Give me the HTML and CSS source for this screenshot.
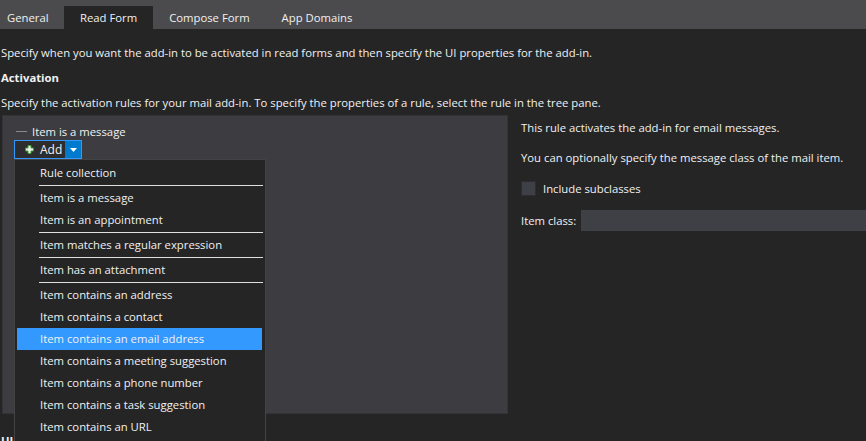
FILE: index.html
```html
<!DOCTYPE html>
<html>
<head>
<meta charset="utf-8">
<link rel="stylesheet" href="styles.css">
</head>
<body>
<div class="tabs">
  <div class="tab first">General</div>
  <div class="tab active">Read Form</div>
  <div class="tab">Compose Form</div>
  <div class="tab">App Domains</div>
</div>
<div class="content">
  <p class="line intro">Specify when you want the add-in to be activated in read forms and then specify the UI properties for the add-in.</p>
  <p class="line heading">Activation</p>
  <p class="line">Specify the activation rules for your mail add-in. To specify the properties of a rule, select the rule in the tree pane.</p>
  <div class="activation">
    <div class="tree">
      <div class="node"><span class="dash"></span>Item is a message</div>
      <div class="add-btn">
        <span class="add-main">
          <svg class="plus" width="9" height="9" viewBox="0 0 9 9"><path d="M3 0.5h3v2.5h2.5v3h-2.5v2.5h-3v-2.5h-2.5v-3h2.5z" fill="#e8f3e6" stroke="#3c9a35" stroke-width="1"/></svg>
          Add
        </span>
        <span class="add-arrow"><svg width="7" height="4" viewBox="0 0 7 4"><path d="M0 0h7L3.5 4z" fill="#fff"/></svg></span>
      </div>
    </div>
    <div class="props">
      <p class="pline">This rule activates the add-in for email messages.</p>
      <p class="pline">You can optionally specify the message class of the mail item.</p>
      <div class="check-row"><span class="checkbox"></span>Include subclasses</div>
      <div class="class-row"><span class="label">Item class:</span><span class="input"></span></div>
    </div>
  </div>
  <p class="line heading ui">UI Properties</p>
</div>
<div class="menu">
  <div class="mi">Rule collection</div>
  <div class="sep"></div>
  <div class="mi">Item is a message</div>
  <div class="mi">Item is an appointment</div>
  <div class="sep"></div>
  <div class="mi">Item matches a regular expression</div>
  <div class="sep"></div>
  <div class="mi">Item has an attachment</div>
  <div class="sep"></div>
  <div class="mi">Item contains an address</div>
  <div class="mi">Item contains a contact</div>
  <div class="mi selected">Item contains an email address</div>
  <div class="mi">Item contains a meeting suggestion</div>
  <div class="mi">Item contains a phone number</div>
  <div class="mi">Item contains a task suggestion</div>
  <div class="mi">Item contains an URL</div>
</div>
</body>
</html>
```
FILE: styles.css
```css
html, body {
  margin: 0;
  padding: 0;
  background: #252526;
  color: #f1f1f1;
  font-family: "Open Sans", "Noto Sans", sans-serif;
  font-size: 11.3px;
  overflow: hidden;
  height: 441px;
}
.tabs {
  height: 29px;
  background: #4b4b4d;
  display: flex;
  align-items: flex-end;
}
.tab {
  height: 23px;
  line-height: 23px;
  padding: 0 16px;
  color: #f1f1f1;
}
.tab.first {
  padding-left: 7px;
  padding-right: 0;
  width: 57px;
}
.tab.active {
  background: #252526;
}
.content {
  padding: 0 0 0 1px;
}
.line {
  margin: 0;
  line-height: 16px;
  white-space: nowrap;
}
.intro {
  margin-top: 16px;
}
.heading {
  font-weight: bold;
  margin-top: 9px;
}
.heading + .line {
  margin-top: 9px;
}
.activation {
  display: flex;
  margin-top: 4px;
  margin-left: 1px;
}
.tree {
  width: 504px;
  background: #3c3c41;
  border: 1px solid #333337;
  flex: none;
  padding-top: 7px;
  box-sizing: content-box;
  height: 290px;
}
.node {
  display: flex;
  align-items: center;
  height: 16px;
  padding-left: 13px;
}
.dash {
  width: 11px;
  height: 1px;
  background: #8a8a8e;
  margin-right: 5px;
}
.add-btn {
  display: flex;
  margin-left: 11px;
  margin-top: 1px;
  width: 66px;
  height: 17px;
  border: 1px solid #3399ff;
}
.add-main {
  flex: 1;
  display: flex;
  align-items: center;
  background: #2d2d30;
  padding-left: 10px;
  gap: 6px;
  line-height: 17px;
  font-size: 12px;
}
.plus {
  display: block;
}
.add-arrow {
  width: 16px;
  background: #007acc;
  display: flex;
  align-items: center;
  justify-content: center;
}
.add-arrow svg {
  display: block;
}
.props {
  padding-left: 13px;
  padding-top: 5px;
  flex: 1;
}
.pline {
  margin: 0 0 14px 0;
  line-height: 16px;
  white-space: nowrap;
}
.check-row {
  display: flex;
  align-items: center;
  height: 16px;
}
.checkbox {
  width: 13px;
  height: 13px;
  background: #3f3f46;
  border: 1px solid #2d2d30;
  margin-right: 7px;
}
.class-row {
  display: flex;
  align-items: center;
  margin-top: 14px;
  height: 21px;
}
.label {
  margin-right: 5px;
}
.input {
  flex: 1;
  height: 21px;
  background: #3f3f46;
}
.ui {
  margin-top: 19px;
}
.menu {
  position: absolute;
  left: 14px;
  top: 159px;
  width: 248px;
  height: 290px;
  background: #252526;
  border: 1px solid #434346;
  padding: 2px 0 0 2px;
}
.mi {
  height: 22px;
  line-height: 22px;
  padding-left: 23px;
  width: 222px;
  white-space: nowrap;
}
.sep {
  height: 1px;
  background: #e0e0e0;
  margin: 1px 2px 1px 22px;
}
.mi.selected {
  background: #3399ff;
}
```
